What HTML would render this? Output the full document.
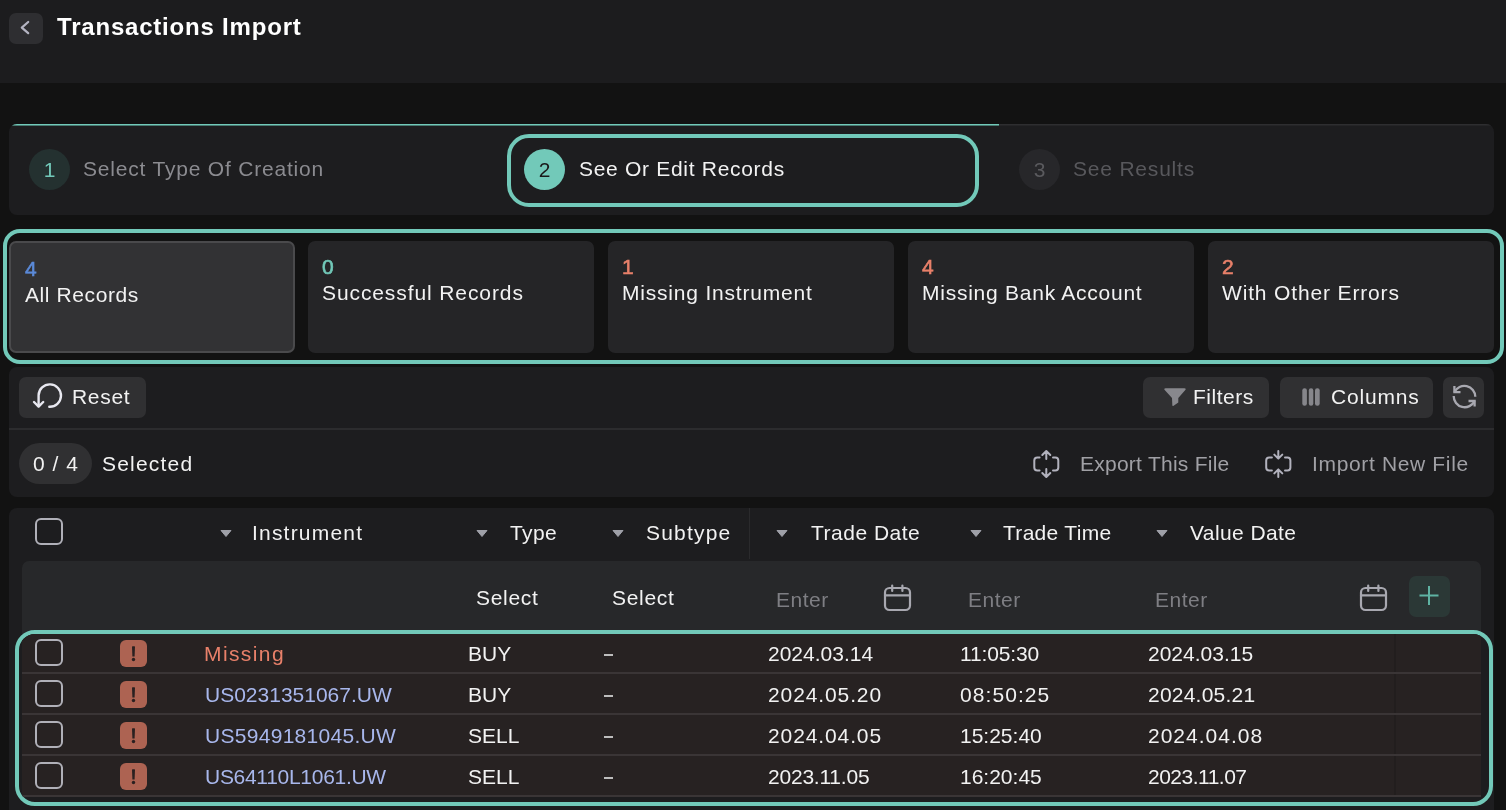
<!DOCTYPE html>
<html><head><meta charset="utf-8">
<style>
*{box-sizing:border-box;margin:0;padding:0}
html,body{width:1506px;height:810px;overflow:hidden;background:#121212;font-family:"Liberation Sans",sans-serif;color:#f2f2f2}
.a{position:absolute}
.t{position:absolute;white-space:nowrap;line-height:1;font-size:21px;letter-spacing:1px;will-change:transform}
.n{letter-spacing:0}
#hdr{left:0;top:0;width:1506px;height:83px;background:#1c1c1e}
#back{left:9px;top:13px;width:34px;height:31px;background:#2e2e31;border-radius:7px}
#title{left:57px;top:15px;font-size:24px;font-weight:700;color:#fff;letter-spacing:0.8px}
#steps{left:9px;top:124px;width:1485px;height:91px;background:#1d1d1f;border-radius:8px;overflow:hidden}
.circ{will-change:transform;position:absolute;width:41px;height:41px;border-radius:50%;text-align:center;line-height:41px;font-size:21px}
#step2{left:507px;top:134px;width:472px;height:73px;border:4px solid #72c9b9;border-radius:22px}
#cards{left:3px;top:229px;width:1501px;height:135px;border:4px solid #72c9b9;border-radius:17px}
.card{position:absolute;top:241px;width:286px;height:112px;background:#252527;border-radius:7px}
.card.sel{background:#323234;border:2px solid #4a4a4c}
.num{will-change:transform;position:absolute;left:14px;top:15px;font-size:21px;font-weight:400;-webkit-text-stroke:0.6px currentColor;line-height:1}
.lbl{will-change:transform;position:absolute;left:14px;top:41px;font-size:21px;letter-spacing:0.9px;line-height:1;white-space:nowrap}
.panel{position:absolute;left:9px;width:1485px;background:#1d1d1f;border-radius:8px}
.btn{position:absolute;background:#303032;border-radius:7px}
.cb{position:absolute;left:35px;width:28px;height:27px;border:2px solid #b0b0b8;border-radius:6px}
.arr{position:absolute;top:530px;width:12px;height:7px}
.err{position:absolute;left:120px;width:27px;height:27px;background:#ad6352;border-radius:6px}
.row{position:absolute;left:22px;width:1459px;height:41px;background:#272222;border-bottom:2px solid #3a3536}
</style></head><body>
<div id="hdr" class="a"></div>
<div id="back" class="a"><svg width="34" height="31" viewBox="0 0 34 31"><path d="M19.2 9 L12.8 14.6 L19.2 20.2" fill="none" stroke="#b4b4c2" stroke-width="2.2" stroke-linecap="round" stroke-linejoin="round"/></svg></div>
<div id="title" class="t">Transactions Import</div>

<div id="steps" class="a">
  <div class="a" style="left:0;top:0;width:990px;height:2px;background:linear-gradient(#72c9b9 0,#72c9b9 1px,#477a71 1px,#477a71 2px)"></div>
  <div class="a" style="left:990px;top:0;width:495px;height:2px;background:linear-gradient(#2e2e30 0,#2e2e30 1px,#252527 1px,#252527 2px)"></div>
</div>
<div class="circ" style="left:29px;top:149px;background:#243130;color:#72c9b9">1</div>
<div class="t" style="left:83px;top:158px;color:#8b8b90;letter-spacing:0.8px">Select Type Of Creation</div>
<div id="step2" class="a"></div>
<div class="circ" style="left:524px;top:149px;background:#72c9b9;color:#1a1a1a">2</div>
<div class="t" style="left:579px;top:158px;color:#f2f2f2;letter-spacing:0.7px">See Or Edit Records</div>
<div class="circ" style="left:1019px;top:149px;background:#27272a;color:#5a5a5e">3</div>
<div class="t" style="left:1073px;top:158px;color:#58585c;letter-spacing:0.8px">See Results</div>

<div id="cards" class="a"></div>
<div class="card sel" style="left:9px;width:286px"><div class="num" style="color:#5b8ad8;left:14px;top:15px">4</div><div class="lbl" style="top:41px;left:14px;letter-spacing:0.6px">All Records</div></div>
<div class="card" style="left:308px"><div class="num" style="color:#72c9b9">0</div><div class="lbl">Successful Records</div></div>
<div class="card" style="left:608px"><div class="num" style="color:#e8806a">1</div><div class="lbl" style="letter-spacing:0.8px">Missing Instrument</div></div>
<div class="card" style="left:908px"><div class="num" style="color:#e8806a">4</div><div class="lbl" style="letter-spacing:0.75px">Missing Bank Account</div></div>
<div class="card" style="left:1208px"><div class="num" style="color:#e8806a">2</div><div class="lbl" style="letter-spacing:0.85px">With Other Errors</div></div>

<!-- toolbar -->
<div class="panel" style="top:367px;height:130px"></div>
<div class="a" style="left:9px;top:428px;width:1485px;height:2px;background:#2c2c2e"></div>
<div class="btn" style="left:19px;top:377px;width:127px;height:41px"></div>
<svg class="a" style="left:0;top:0" width="70" height="420" viewBox="0 0 70 420"><path d="M49.3 406.8 A11.2 11.2 0 1 0 38.6 395.3 L38.6 406" fill="none" stroke="#e8e8f0" stroke-width="2.4" stroke-linecap="round"/><path d="M34 402 L38.6 406.6 L43.2 402" fill="none" stroke="#e8e8f0" stroke-width="2.4" stroke-linecap="round" stroke-linejoin="round"/></svg>
<div class="t" style="left:72px;top:386px;letter-spacing:0.7px">Reset</div>
<div class="btn" style="left:1143px;top:377px;width:126px;height:41px"></div>
<svg class="a" style="left:1160px;top:384px" width="30" height="26" viewBox="1160 384 30 26"><path d="M1165.6 388.2 L1184.4 388.2 Q1186.6 388.2 1185.3 390 L1178.3 397.9 L1178.3 402.4 L1173.6 405.7 Q1172.3 406.4 1172.3 405 L1172 397.9 L1164.7 390 Q1163.4 388.2 1165.6 388.2 Z" fill="#88888d"/></svg>
<div class="t" style="left:1193px;top:386px;letter-spacing:0.5px">Filters</div>
<div class="btn" style="left:1280px;top:377px;width:153px;height:41px"></div>
<svg class="a" style="left:1302px;top:388px" width="18" height="18" viewBox="0 0 18 18"><rect x="0.3" y="0.3" width="4.6" height="17.4" rx="2.2" fill="#86868b"/><rect x="6.8" y="0.3" width="4.5" height="17.4" rx="2.2" fill="#86868b"/><rect x="13" y="0.3" width="4.7" height="17.4" rx="2.2" fill="#86868b"/></svg>
<div class="t" style="left:1331px;top:386px;letter-spacing:0.8px">Columns</div>
<div class="btn" style="left:1443px;top:377px;width:41px;height:41px"></div>
<svg class="a" style="left:1440px;top:375px" width="50" height="45" viewBox="1440 375 50 45"><path d="M1454.4 392.1 A11 11 0 0 1 1475.3 396.8" fill="none" stroke="#a8a8b0" stroke-width="2.3"/><path d="M1454.4 386 L1454.4 392.1 L1460.5 392.1" fill="none" stroke="#a8a8b0" stroke-width="2.3"/><path d="M1453.7 396 A11 11 0 0 0 1474.6 401" fill="none" stroke="#a8a8b0" stroke-width="2.3"/><path d="M1468.5 401 L1474.6 401 L1474.6 406.6" fill="none" stroke="#a8a8b0" stroke-width="2.3"/></svg>

<div class="btn" style="left:19px;top:443px;width:73px;height:41px;border-radius:21px"></div>
<div class="t" style="left:33px;top:453px">0 / 4</div>
<div class="t" style="left:102px;top:453px;letter-spacing:1.2px">Selected</div>
<svg class="a" style="left:1025px;top:440px" width="300" height="50" viewBox="1025 440 300 50"><g fill="none" stroke="#b2b2bd" stroke-width="2" stroke-linecap="round" stroke-linejoin="round"><path d="M1039.6 457.4 L1037.3 457.4 Q1034.3 457.4 1034.3 460.4 L1034.3 467.5 Q1034.3 470.5 1037.3 470.5 L1039.6 470.5"/><path d="M1053 457.4 L1055.3 457.4 Q1058.3 457.4 1058.3 460.4 L1058.3 467.5 Q1058.3 470.5 1055.3 470.5 L1053 470.5"/><path d="M1046.3 451.5 L1046.3 459 M1042.3 455 L1046.3 451 L1050.3 455"/><path d="M1046.3 469 L1046.3 476.5 M1042.3 473 L1046.3 477 L1050.3 473"/>
<path d="M1271.9 457.4 L1269.2 457.4 Q1266.2 457.4 1266.2 460.4 L1266.2 467.5 Q1266.2 470.5 1269.2 470.5 L1271.9 470.5"/><path d="M1285 457.4 L1287.4 457.4 Q1290.4 457.4 1290.4 460.4 L1290.4 467.5 Q1290.4 470.5 1287.4 470.5 L1285 470.5"/><path d="M1278.3 451 L1278.3 458.5 M1274.3 454.6 L1278.3 458.6 L1282.3 454.6"/><path d="M1278.3 469.5 L1278.3 477 M1274.3 473.4 L1278.3 469.4 L1282.3 473.4"/></g></svg>
<div class="t" style="left:1080px;top:453px;color:#a0a0a5;letter-spacing:0.25px">Export This File</div>
<div class="t" style="left:1312px;top:453px;color:#a0a0a5;letter-spacing:0.65px">Import New File</div>

<!-- table -->
<div class="panel" style="top:508px;height:320px"></div>
<div class="cb" style="top:518px"></div>
<svg class="arr" style="left:220px" viewBox="0 0 12 7"><path d="M1 0.5 L11 0.5 L6 6.5 Z" fill="#9fa0a8" stroke="#9fa0a8" stroke-width="1" stroke-linejoin="round"/></svg>
<div class="t" style="left:252px;top:522px;letter-spacing:1.2px">Instrument</div>
<svg class="arr" style="left:476px" viewBox="0 0 12 7"><path d="M1 0.5 L11 0.5 L6 6.5 Z" fill="#9fa0a8" stroke="#9fa0a8" stroke-width="1" stroke-linejoin="round"/></svg>
<div class="t" style="left:510px;top:522px;letter-spacing:0.4px">Type</div>
<svg class="arr" style="left:612px" viewBox="0 0 12 7"><path d="M1 0.5 L11 0.5 L6 6.5 Z" fill="#9fa0a8" stroke="#9fa0a8" stroke-width="1" stroke-linejoin="round"/></svg>
<div class="t" style="left:646px;top:522px;letter-spacing:1.2px">Subtype</div>
<div class="a" style="left:749px;top:508px;width:1px;height:51px;background:#2a2a2c"></div>
<svg class="arr" style="left:776px" viewBox="0 0 12 7"><path d="M1 0.5 L11 0.5 L6 6.5 Z" fill="#9fa0a8" stroke="#9fa0a8" stroke-width="1" stroke-linejoin="round"/></svg>
<div class="t" style="left:811px;top:522px;letter-spacing:0.5px">Trade Date</div>
<svg class="arr" style="left:970px" viewBox="0 0 12 7"><path d="M1 0.5 L11 0.5 L6 6.5 Z" fill="#9fa0a8" stroke="#9fa0a8" stroke-width="1" stroke-linejoin="round"/></svg>
<div class="t" style="left:1003px;top:522px;letter-spacing:0.3px">Trade Time</div>
<svg class="arr" style="left:1156px" viewBox="0 0 12 7"><path d="M1 0.5 L11 0.5 L6 6.5 Z" fill="#9fa0a8" stroke="#9fa0a8" stroke-width="1" stroke-linejoin="round"/></svg>
<div class="t" style="left:1190px;top:522px;letter-spacing:0.4px">Value Date</div>

<div class="a" style="left:22px;top:561px;width:1459px;height:75px;background:#27282a;border-radius:7px 7px 0 0"></div>
<div class="t" style="left:476px;top:587px;letter-spacing:0.7px">Select</div>
<div class="t" style="left:612px;top:587px;letter-spacing:0.7px">Select</div>
<div class="t" style="left:776px;top:589px;color:#7e7e83;letter-spacing:0.5px">Enter</div>
<div class="t" style="left:968px;top:589px;color:#7e7e83;letter-spacing:0.5px">Enter</div>
<div class="t" style="left:1155px;top:589px;color:#7e7e83;letter-spacing:0.5px">Enter</div>
<svg class="a" style="left:880px;top:578px" width="520" height="38" viewBox="880 578 520 38"><g fill="none" stroke="#a8a8b0" stroke-width="2.2" stroke-linecap="round"><rect x="885" y="588" width="25" height="22" rx="4.5"/><path d="M885 595.3 L910 595.3 M892.2 585.5 L892.2 591 M902.4 585.5 L902.4 591"/><rect x="1361" y="588" width="25" height="22" rx="4.5"/><path d="M1361 595.3 L1386 595.3 M1368.2 585.5 L1368.2 591 M1378.4 585.5 L1378.4 591"/></g></svg>
<div class="a" style="left:1409px;top:576px;width:41px;height:41px;background:#2b3836;border-radius:7px"></div>
<svg class="a" style="left:1409px;top:576px" width="41" height="41" viewBox="0 0 41 41"><path d="M10.5 19.5 L29.5 19.5 M20 10 L20 29" stroke="#5fb3a3" stroke-width="2" fill="none"/></svg>

<!-- rows -->
<div class="a" style="left:15px;top:630px;width:1478px;height:176px;border:4px solid #72c9b9;border-radius:20px;background:#1d1d1f;overflow:hidden">
<div class="a" style="left:3px;top:-1px;width:1459px;height:164px;background:#272222"></div>
<div class="a" style="left:1375px;top:-1px;width:2px;height:164px;background:#221e1e"></div>
<div class="a" style="left:3px;top:38px;width:1459px;height:2px;background:#3a3536"></div>
<div class="a" style="left:3px;top:79px;width:1459px;height:2px;background:#3a3536"></div>
<div class="a" style="left:3px;top:120px;width:1459px;height:2px;background:#3a3536"></div>
<div class="a" style="left:3px;top:161px;width:1459px;height:2px;background:#3a3536"></div>
</div>
<div class="cb" style="top:639px"></div>
<div class="cb" style="top:680px"></div>
<div class="cb" style="top:721px"></div>
<div class="cb" style="top:762px"></div>
<div class="err" style="top:640px"><svg width="27" height="27" viewBox="0 0 27 27" style="position:absolute;left:0;top:0"><path d="M12 6.8 Q12 6.2 12.6 6.2 L14.4 6.2 Q15 6.2 15 6.8 L14.6 16.4 L12.4 16.4 Z" fill="#2a2020"/><circle cx="13.5" cy="19.5" r="1.7" fill="#2a2020"/></svg></div>
<div class="err" style="top:681px"><svg width="27" height="27" viewBox="0 0 27 27" style="position:absolute;left:0;top:0"><path d="M12 6.8 Q12 6.2 12.6 6.2 L14.4 6.2 Q15 6.2 15 6.8 L14.6 16.4 L12.4 16.4 Z" fill="#2a2020"/><circle cx="13.5" cy="19.5" r="1.7" fill="#2a2020"/></svg></div>
<div class="err" style="top:722px"><svg width="27" height="27" viewBox="0 0 27 27" style="position:absolute;left:0;top:0"><path d="M12 6.8 Q12 6.2 12.6 6.2 L14.4 6.2 Q15 6.2 15 6.8 L14.6 16.4 L12.4 16.4 Z" fill="#2a2020"/><circle cx="13.5" cy="19.5" r="1.7" fill="#2a2020"/></svg></div>
<div class="err" style="top:763px"><svg width="27" height="27" viewBox="0 0 27 27" style="position:absolute;left:0;top:0"><path d="M12 6.8 Q12 6.2 12.6 6.2 L14.4 6.2 Q15 6.2 15 6.8 L14.6 16.4 L12.4 16.4 Z" fill="#2a2020"/><circle cx="13.5" cy="19.5" r="1.7" fill="#2a2020"/></svg></div>

<div class="t" style="left:204px;top:642.8px;color:#e8806a;letter-spacing:1.4px">Missing</div>
<div class="t n" style="left:205px;top:683.8px;color:#a8b7ec">US0231351067.UW</div>
<div class="t n" style="left:205px;top:724.9px;color:#a8b7ec;letter-spacing:0.29px">US5949181045.UW</div>
<div class="t n" style="left:205px;top:765.9px;color:#a8b7ec;letter-spacing:-0.29px">US64110L1061.UW</div>
<div class="t n" style="left:468px;top:642.8px">BUY</div>
<div class="t n" style="left:468px;top:683.8px">BUY</div>
<div class="t n" style="left:468px;top:724.9px">SELL</div>
<div class="t n" style="left:468px;top:765.9px">SELL</div>
<div class="a" style="left:604px;top:654px;width:9px;height:2px;background:#bdbdbd"></div>
<div class="a" style="left:604px;top:695px;width:9px;height:2px;background:#bdbdbd"></div>
<div class="a" style="left:604px;top:736px;width:9px;height:2px;background:#bdbdbd"></div>
<div class="a" style="left:604px;top:777px;width:9px;height:2px;background:#bdbdbd"></div>
<div class="t n" style="left:768px;top:642.8px">2024.03.14</div>
<div class="t n" style="left:768px;top:683.8px;letter-spacing:0.89px">2024.05.20</div>
<div class="t n" style="left:768px;top:724.9px;letter-spacing:0.89px">2024.04.05</div>
<div class="t n" style="left:768px;top:765.9px;letter-spacing:-0.22px">2023.11.05</div>
<div class="t n" style="left:960px;top:642.8px;letter-spacing:-0.14px">11:05:30</div>
<div class="t n" style="left:960px;top:683.8px;letter-spacing:1.07px">08:50:25</div>
<div class="t n" style="left:960px;top:724.9px">15:25:40</div>
<div class="t n" style="left:960px;top:765.9px">16:20:45</div>
<div class="t n" style="left:1148px;top:642.8px">2024.03.15</div>
<div class="t n" style="left:1148px;top:683.8px;letter-spacing:0.22px">2024.05.21</div>
<div class="t n" style="left:1148px;top:724.9px;letter-spacing:1.0px">2024.04.08</div>
<div class="t n" style="left:1148px;top:765.9px;letter-spacing:-0.5px">2023.11.07</div>
</body></html>
